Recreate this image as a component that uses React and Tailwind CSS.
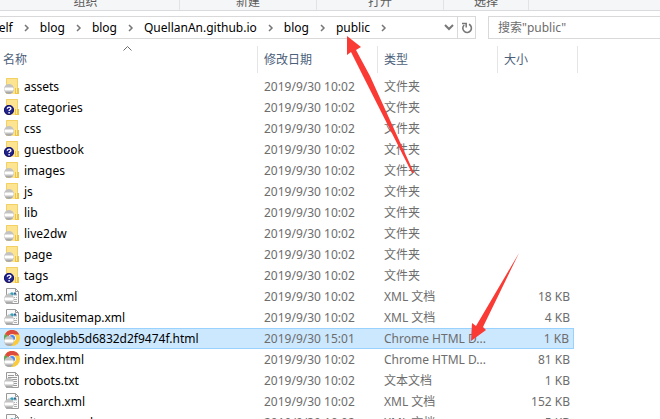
import React from "react";

const folders = [
  ["assets", false],
  ["categories", true],
  ["css", false],
  ["guestbook", true],
  ["images", false],
  ["js", false],
  ["lib", false],
  ["live2dw", false],
  ["page", false],
  ["tags", true],
];

const rows = [
  ...folders.map(([name, unknown]) => ({
    name,
    icon: "folder",
    unknown,
    date: "2019/9/30 10:02",
    type: "文件夹",
    size: "",
  })),
  { name: "atom.xml", icon: "xml", date: "2019/9/30 10:02", type: "XML 文档", size: "18 KB" },
  { name: "baidusitemap.xml", icon: "xml", date: "2019/9/30 10:02", type: "XML 文档", size: "4 KB" },
  { name: "googlebb5d6832d2f9474f.html", icon: "chrome", date: "2019/9/30 15:01", type: "Chrome HTML D...", size: "1 KB", selected: true },
  { name: "index.html", icon: "chrome", date: "2019/9/30 10:02", type: "Chrome HTML D...", size: "81 KB" },
  { name: "robots.txt", icon: "txt", date: "2019/9/30 10:02", type: "文本文档", size: "1 KB" },
  { name: "search.xml", icon: "xml", date: "2019/9/30 10:02", type: "XML 文档", size: "152 KB" },
  { name: "sitemap.xml", icon: "xml", date: "2019/9/30 10:02", type: "XML 文档", size: "5 KB" },
];

const crumbs = ["self", "blog", "blog", "QuellanAn.github.io", "blog", "public"];

function Badge({ unknown }) {
  if (unknown) {
    return (
      <g>
        <circle cx="5" cy="11" r="5" fill="#23238c" />
        <circle cx="5" cy="11" r="4.500" fill="none" stroke="#15156a" />
        <path d="M3.300 9.800c0-2.200 3.600-2.200 3.600-.2 0 1.200-1.800 1.100-1.800 2.300M5.100 13v1.400" fill="none" stroke="#fff" strokeWidth="1.400" />
      </g>
    );
  }
  return (
    <g>
      <circle cx="5" cy="11" r="5" fill="#c2c2c2" />
      <path d="M1 14a5 5 0 0 0 8 0z" fill="#a9a9a9" />
      <rect x="0.500" y="9.500" width="9" height="3" rx="1" fill="#fff" />
    </g>
  );
}

function FileIcon({ kind, unknown }) {
  return (
    <svg width="16" height="16" viewBox="0 0 16 16" className="mb-px shrink-0" aria-hidden="true">
      {kind === "folder" && (
        <g>
          <path d="M2 0h12v16H2z" fill="#fde492" />
          <path d="M2.500 16V.5h11v10" fill="none" stroke="#f2d064" />
          <path d="M11 10h4v6h-4z" fill="#f0c544" />
          <path d="M12 9h1v6h-1z" fill="#fdeaa6" />
        </g>
      )}
      {(kind === "xml" || kind === "txt") && (
        <g>
          <path d="M2.500.5h9l3 3v12h-12z" fill="#fafafa" stroke="#999" />
          <path d="M11.500.5v3h3" fill="none" stroke="#999" />
        </g>
      )}
      {kind === "xml" && (
        <g>
          <path d="M4 6.500h3M10 6.500h3" stroke="#a5bcc4" strokeWidth="2" />
          <circle cx="8" cy="6" r="1.800" fill="#35a0b8" />
          <path d="M10 4.500h2v2h-2z" fill="#3b5f88" />
          <path d="M10 9.500h1M12 9.500h1M10 11.500h3M10 13.500h3" stroke="#b0b0b0" />
        </g>
      )}
      {kind === "txt" && <path d="M4 3.500h6M4 5.500h9M4 7.500h9M6 9.500h7M9 11.500h4M9 13.500h4" stroke="#9a9a9a" />}
      {kind === "chrome" && (
        <g>
          <circle cx="8" cy="8" r="8" fill="#fbcb3c" />
          <path d="M8 8 1 4a8 8 0 0 0 6 12z" fill="#58a65c" />
          <path d="M8 8 1 4a8 8 0 0 1 14 0v.5H8z" fill="#dd4b3e" />
          <circle cx="8" cy="8" r="3.800" fill="#fff" />
          <circle cx="8" cy="8" r="3" fill="#4a8af4" />
        </g>
      )}
      <Badge unknown={unknown} />
    </svg>
  );
}

function Chevron() {
  return (
    <svg width="6" height="8" viewBox="0 0 6 8" className="shrink-0" aria-hidden="true">
      <path d="M1 1l3 3-3 3" fill="none" stroke="#777" strokeWidth="1.500" />
    </svg>
  );
}

export default function App() {
  return (
    <main className="relative h-screen overflow-hidden bg-white font-['Noto_Sans','Noto_Sans_CJK_SC',sans-serif] text-xs text-[#6d6d6d]">
      <div className="flex h-[11px] items-end overflow-hidden border-b border-[#dadbdc] bg-[#f5f6f7] leading-4 text-[#5a5a5a]">
        <span className="flex h-4 w-[180px] shrink-0 items-center justify-center border-r border-[#e2e3e4] pr-2">组织</span>
        <span className="flex h-4 w-[137px] shrink-0 items-center justify-center border-r border-[#e2e3e4]">新建</span>
        <span className="flex h-4 w-[127px] shrink-0 items-center justify-center border-r border-[#e2e3e4]">打开</span>
        <span className="flex h-4 w-[85px] shrink-0 items-center justify-center border-r border-[#e2e3e4]">选择</span>
      </div>

      <div className="mt-[5px] flex h-[23px]">
        <nav aria-label="路径" className="flex min-w-0 flex-1 border-y border-r border-[#d9d9d9] text-black">
          <ol className="-ml-[7px] flex min-w-0 flex-1 items-center">
            {crumbs.map((c, i) => (
              <li key={i} className="flex items-center">
                <a href="#" className="pr-[11px]">{c}</a>
                <span className="pr-[10px]"><Chevron /></span>
              </li>
            ))}
          </ol>
          <button aria-label="历史记录" className="flex w-4 items-center justify-center">
            <svg width="10" height="7" viewBox="0 0 10 7"><path d="M1 1l4 4 4-4" fill="none" stroke="#777" strokeWidth="2" /></svg>
          </button>
          <button aria-label="刷新" className="flex w-[18px] items-center justify-center border-l border-[#d9d9d9]">
            <svg width="12" height="12" viewBox="0 0 12 12">
              <path d="M8 2.300A4.300 4.300 0 1 1 3.200 3" fill="none" stroke="#777" strokeWidth="1.600" />
              <path d="M1 1.500h4.200v4" fill="none" stroke="#777" strokeWidth="1.500" />
            </svg>
          </button>
        </nav>
        <input
          aria-label="搜索"
          placeholder={'搜索"public"'}
          className="ml-3 w-[172px] shrink-0 border-y border-l border-[#d9d9d9] px-[9px] outline-none placeholder:text-[#6d6d6d]"
        />
      </div>

      <table className="mt-[7px] w-full table-fixed border-collapse text-left">
        <colgroup>
          <col className="w-[258px]" />
          <col className="w-[120px]" />
          <col className="w-[120px]" />
          <col className="w-[80px]" />
          <col />
        </colgroup>
        <thead>
          <tr className="h-[30px] text-[#4c607a]">
            <th className="relative p-0 pb-[3px] font-normal">
              <div className="flex h-[27px] items-center border-r border-[#e5e5e5] pl-[3px]">名称</div>
              <svg width="9" height="5" viewBox="0 0 9 5" className="absolute top-0 left-[123px]" aria-hidden="true">
                <path d="M.5 4.500l4-4 4 4" fill="none" stroke="#6d6d6d" />
              </svg>
            </th>
            <th className="p-0 pb-[3px] font-normal"><div className="flex h-[27px] items-center border-r border-[#e5e5e5] pl-[6px]">修改日期</div></th>
            <th className="p-0 pb-[3px] font-normal"><div className="flex h-[27px] items-center border-r border-[#e5e5e5] pl-[6px]">类型</div></th>
            <th className="p-0 pb-[3px] font-normal"><div className="flex h-[27px] items-center border-r border-[#e5e5e5] pl-[6px]">大小</div></th>
            <td />
          </tr>
        </thead>
        <tbody>
          {rows.map((r) => {
            const cell = r.selected ? "flex h-[21px] items-center border-y border-[#99d1ff] bg-[#cce8ff]" : "flex h-[21px] items-center";
            return (
              <tr key={r.name}>
                <td className="p-0 text-black"><div className={cell + " gap-1 pl-1"}><FileIcon kind={r.icon} unknown={r.unknown} />{r.name}</div></td>
                <td className="p-0"><div className={cell + " pl-[6px]"}>{r.date}</div></td>
                <td className="p-0"><div className={cell + " pl-[6px] whitespace-nowrap"}>{r.type}</div></td>
                <td className="p-0 pr-[4px]"><div className={cell + " justify-end pr-[4px]" + (r.selected ? " border-r" : "")}>{r.size}</div></td>
                <td />
              </tr>
            );
          })}
        </tbody>
      </table>

      <svg width="660" height="419" viewBox="0 0 660 419" className="pointer-events-none absolute top-0 left-0" aria-hidden="true">
        <path d="M347 36L361 47L356 50L370 76L414 173L412 173L363 76L351 52L347 55z" fill="#fa3a34" />
        <path d="M519 253L483 327L486 330L471 341L472 323L476 326z" fill="#fa3a34" />
      </svg>
    </main>
  );
}
